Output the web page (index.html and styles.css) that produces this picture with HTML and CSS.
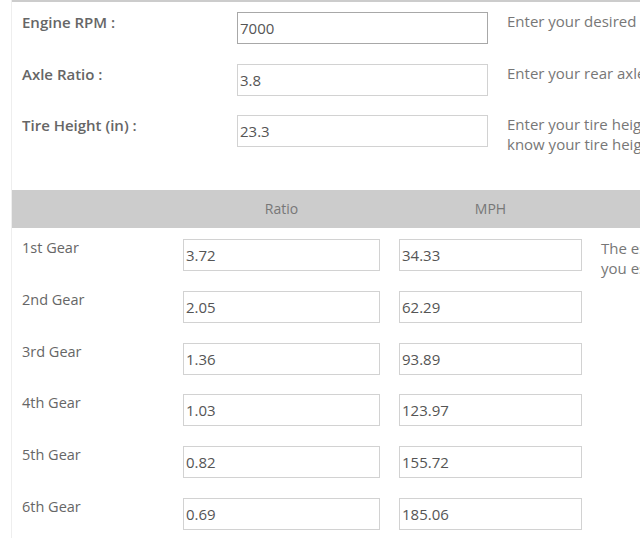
FILE: index.html
```html
<!DOCTYPE html>
<html lang="en">
<head>
    <meta charset="UTF-8">
    <meta name="viewport" content="width=device-width, initial-scale=1.0">
    <title>Gear Ratio Calculator</title>
    <link rel="stylesheet" href="styles.css">
</head>
<body>
    <div class="calculator">
        <div class="top-bar"></div>

        <div class="inputs">
            <div class="field">
                <label for="rpm">Engine RPM :</label>
                <input type="text" id="rpm" class="focused" value="7000">
                <p class="help">Enter your desired RPM at the top of each gear.</p>
            </div>
            <div class="field">
                <label for="axle">Axle Ratio :</label>
                <input type="text" id="axle" value="3.8">
                <p class="help">Enter your rear axle ratio.</p>
            </div>
            <div class="field">
                <label for="tire">Tire Height (in) :</label>
                <input type="text" id="tire" value="23.3">
                <p class="help">Enter your tire height in inches. If you don't<br>know your tire height use the tire calculator.</p>
            </div>
        </div>

        <div class="gear-head">
            <span></span>
            <span>Ratio</span>
            <span>MPH</span>
        </div>

        <div class="gears">
            <div class="gear">
                <span class="gear-name">1st Gear</span>
                <input type="text" value="3.72">
                <input type="text" value="34.33">
                <p class="help">The estimated speed at the top of each gear<br>you established with the values above.</p>
            </div>
            <div class="gear">
                <span class="gear-name">2nd Gear</span>
                <input type="text" value="2.05">
                <input type="text" value="62.29">
            </div>
            <div class="gear">
                <span class="gear-name">3rd Gear</span>
                <input type="text" value="1.36">
                <input type="text" value="93.89">
            </div>
            <div class="gear">
                <span class="gear-name">4th Gear</span>
                <input type="text" value="1.03">
                <input type="text" value="123.97">
            </div>
            <div class="gear">
                <span class="gear-name">5th Gear</span>
                <input type="text" value="0.82">
                <input type="text" value="155.72">
            </div>
            <div class="gear">
                <span class="gear-name">6th Gear</span>
                <input type="text" value="0.69">
                <input type="text" value="185.06">
            </div>
        </div>
    </div>
</body>
</html>
```

FILE: styles.css
```css
html {
    overflow-x: hidden;
}
body {
    margin: 0;
    font-family: "Open Sans", Arial, sans-serif;
    font-size: 14px;
    line-height: 20px;
    color: #666;
    background-color: #fff;
}
.calculator {
    width: 1100px;
    margin-left: 11px;
    padding-bottom: 20px;
    border-left: 1px solid #eee;
}
.top-bar {
    height: 2px;
    background-color: #ccc;
}
.inputs {
    display: flex;
    flex-direction: column;
    gap: 19.5px;
    padding: 10px 0 0 10px;
    margin-bottom: 36px;
}
.field {
    display: grid;
    grid-template-columns: 196px 251px 500px;
    column-gap: 19px;
    align-items: start;
}
.field label {
    font-size: 15px;
    font-weight: 600;
    color: #666;
}
input {
    height: 32px;
    box-sizing: border-box;
    padding: 0 2px;
    border: 1px solid #d2d2d2;
    font-family: "Open Sans", Arial, sans-serif;
    font-size: 15px;
    color: #555;
    background-color: #fff;
    margin: 0;
}
input.focused {
    border-color: #a8a8a8;
}
.help {
    margin: 0;
    font-size: 15px;
    color: #777;
}
.field .help {
    margin-top: -1px;
}
.gear-head {
    display: grid;
    grid-template-columns: 142px 197px 183px;
    column-gap: 19px;
    padding-left: 10px;
    height: 38px;
    align-items: center;
    background-color: #ccc;
    color: #777;
}
.gear-head span {
    text-align: center;
}
.gears {
    display: flex;
    flex-direction: column;
    gap: 19.8px;
    padding: 11px 0 0 10px;
}
.gear {
    display: grid;
    grid-template-columns: 142px 197px 183px 500px;
    column-gap: 19px;
    align-items: start;
    height: 32px;
}
.gear-name {
    font-size: 14.5px;
    margin-top: -1px;
}
.gear .help {
    margin-top: -1px;
}
```
